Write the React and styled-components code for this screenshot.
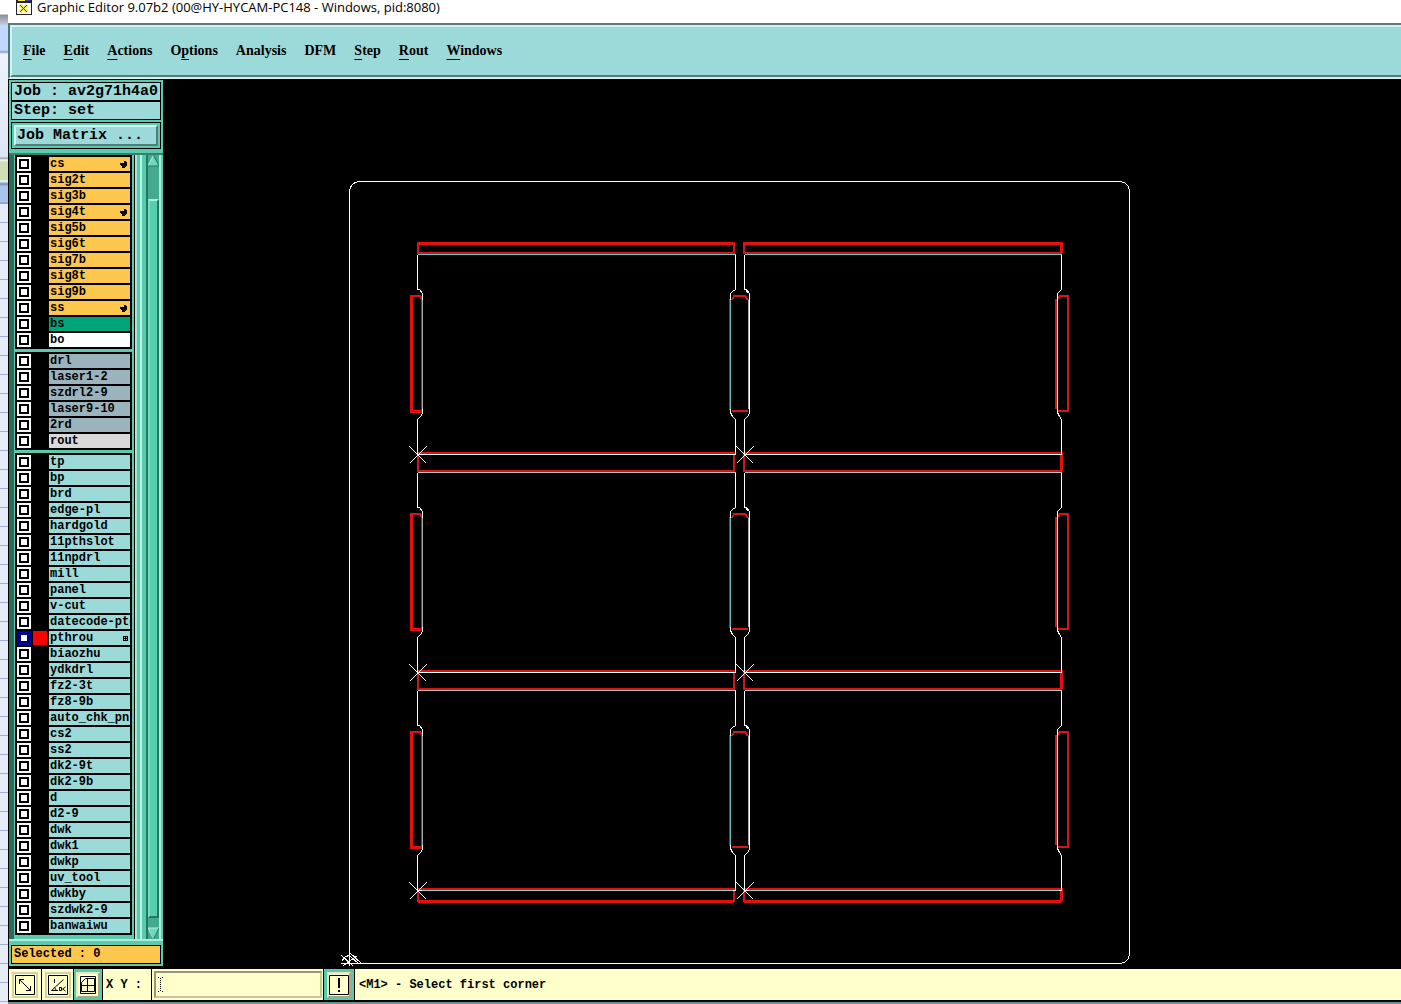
import React, { useState } from 'react';
import styled, { createGlobalStyle } from 'styled-components';

const GlobalStyle = createGlobalStyle`
  * {
    box-sizing: border-box;
  }

  body {
    margin: 0;
    background: #000;
    color: #000;
  }

  button,
  input {
    margin: 0;
    padding: 0;
    border-radius: 0;
    font: inherit;
    color: inherit;
  }
`;

const Screen = styled.div`
  display: flex;
  min-height: 100vh;
`;

const DesktopEdge = styled.div`
  flex: 0 0 8px;
  background:
    linear-gradient(
      #fff 0, #fff 14px, #8a8fa0 15px, #c9cede 25px, #c2d9ff 26px, #c2d9ff 50px,
      #8fa3c4 52px, #eef3fb 54px, #dce6f5 157px, #8e98a8 158px, #f6f8fb 160px,
      #cfe0b4 162px, #cfe0b4 180px, #fff 181px, #6f8fbe 184px, #a8c4ec 186px,
      #a8c4ec 202px, #7d97c2 203px, transparent 204px
    ),
    repeating-linear-gradient(#e6edf9 0, #e6edf9 13px, #9fb3d0 13px, #9fb3d0 14px, #e6edf9 14px, #e6edf9 19px);
`;

const EditorWindow = styled.div`
  display: flex;
  flex: 1;
  flex-direction: column;
  min-width: 0;
`;

const TitleBar = styled.header`
  display: flex;
  align-items: flex-start;
  gap: 5px;
  height: 23px;
  padding-left: 8px;
  background: #fff;
  overflow: hidden;

  svg {
    flex: none;
  }
`;

const Title = styled.h1`
  margin: 0;
  font: 400 13px/14px 'Open Sans', 'Noto Sans', sans-serif;
  white-space: nowrap;
`;

const MenuBar = styled.nav`
  border-top: 2px solid #5d7b7b;
  border-left: 2px solid #4a7676;
  border-bottom: 2px solid #d5f3f1;
`;

const MenuList = styled.div`
  display: flex;
  align-items: center;
  gap: 18px;
  height: 52px;
  padding: 0 11px;
  background: #9cdada;
  border-top: 2px solid #d0f4f4;
  border-left: 2px solid #d0f4f4;
  border-bottom: 2px solid #557c7b;
`;

const MenuButton = styled.button`
  border: 0;
  background: none;
  font: bold 14px/20px 'Liberation Serif', serif;

  u {
    text-underline-offset: 4px;
    text-decoration-thickness: 1px;
  }
`;

const Workspace = styled.div`
  display: flex;
  flex: 1;
`;

const Sidebar = styled.aside`
  display: flex;
  flex: 0 0 155px;
  flex-direction: column;
  min-width: 0;
  border-top: 1px solid #000;
  border-left: 1px solid #000;
  border-bottom: 2px solid #000;
  background: #5acbae;
  font: bold 12px/14px 'Liberation Mono', monospace;
`;

const JobPanel = styled.div`
  padding: 2px 2px 4px;
  font-size: 15px;
`;

const JobLine = styled.div`
  height: 19px;
  padding-left: 2px;
  border: 1px solid #000;
  background: #9cdada;
  line-height: 17px;
  white-space: pre;
`;

const MatrixFrame = styled.div`
  height: 27px;
  margin-top: 2px;
  padding: 2px;
  border: 1px solid #000;
`;

const MatrixButton = styled.button`
  display: block;
  width: 100%;
  height: 21px;
  padding-left: 1px;
  border: 2px solid;
  border-color: #d0f4f4 #557c7b #557c7b #d0f4f4;
  background: #9cdada;
  line-height: 17px;
  text-align: left;
`;

const ListArea = styled.div`
  display: flex;
  flex: 1;
  padding-right: 2px;
  border-top: 2px solid #35816b;
  border-bottom: 2px solid #a9efda;
`;

const LayerList = styled.div`
  display: flex;
  flex: 0 0 126px;
  flex-direction: column;
  gap: 3px;
  min-width: 0;
  padding: 0 2px 0 1px;
  border-left: 5px solid #2f6a59;
  border-right: 1px solid #000;
`;

const LayerGroup = styled.div`
  display: flex;
  flex-direction: column;
  gap: 2px;
  padding: 2px;
  background: #000;
`;

const LayerRow = styled.label`
  display: flex;
  gap: 2px;
  height: 14px;
`;

const LayerCheck = styled.input`
  appearance: none;
  flex: 0 0 14px;
  height: 14px;
  border: 2px solid #fff;
  background: #fff;
  box-shadow: inset 0 0 0 2px #000;

  &:checked {
    border-color: #0000a0;
    box-shadow: inset 0 0 0 2px #000078;
  }
`;

const Swatch = styled.span`
  flex: 0 0 14px;
  background: ${props => (props.$on ? '#f00' : '#000')};
`;

const fills = {
  signal: '#fdc74e',
  solder: '#00a47b',
  outline: '#fff',
  drill: '#9bb3bd',
  rout: '#d9d9d9',
  doc: '#9cdada',
};

const LayerName = styled.span`
  display: flex;
  flex: 1;
  align-items: center;
  min-width: 0;
  padding-left: 1px;
  background: ${props => fills[props.$kind]};
  overflow: hidden;
  white-space: nowrap;

  svg {
    flex: none;
    margin: 0 2px 0 auto;
  }
`;

const PaneEdge = styled.div`
  flex: 0 0 11px;
  background: linear-gradient(
    90deg,
    #a0ecd6 0 2px, #5acbae 2px 5px, #b4f5e3 5px 7px, #5acbae 7px
  );
`;

const ScrollBar = styled.div`
  display: flex;
  flex: 0 0 15px;
  flex-direction: column;
  border-left: 2px solid #277560;
  border-right: 2px solid #a9efda;
  background: #45a98f;
`;

const ScrollArrow = styled.button`
  height: 12px;
  border: 0;
  background: none;

  svg {
    display: block;
  }
`;

const Thumb = styled.div`
  flex: 1;
  margin: 32px 0 9px;
  border: 2px solid;
  border-color: #a9efda #277560 #277560 #70dcc0;
  background: #55cfb0;
`;

const Selected = styled.output`
  display: block;
  height: 19px;
  margin: 4px 2px 2px;
  padding-left: 2px;
  border: 1px solid #000;
  background: #fdc74e;
  line-height: 17px;
  white-space: pre;
`;

const Canvas = styled.main`
  flex: 1;
  min-width: 0;
  background: #000;
  overflow: hidden;

  svg {
    display: block;
  }
`;

const StatusBar = styled.footer`
  display: flex;
  gap: 1px;
  height: 36px;
  padding-left: 1px;
  border-top: 1px solid #000;
  border-bottom: 2px solid #6a9494;
  background: #000;
  font: bold 12px/16px 'Liberation Mono', monospace;
`;

const StatusCell = styled.div`
  display: flex;
  align-items: center;
  justify-content: center;
  flex: 0 0 ${props => props.$width}px;
  height: 31px;
  background: ${props => (props.$active ? '#55c9ac' : '#ffc')};
`;

const ToolButton = styled.button`
  display: flex;
  align-items: center;
  justify-content: center;
  width: ${props => (props.$active ? 24 : 26)}px;
  height: 26px;
  border: 2px solid;
  border-color: ${props => (props.$active ? '#e8e8bc #a8a583 #a8a583 #e8e8bc' : '#d3d3a5')};
  background: #ffc;

  svg {
    flex: none;
  }
`;

const CoordLabel = styled.label`
  flex: 0 0 48px;
  height: 31px;
  padding-left: 3px;
  background: #ffc;
  line-height: 32px;
  white-space: pre;
`;

const CoordInput = styled.input`
  width: 168px;
  height: 27px;
  padding-left: 4px;
  border: 2px solid;
  border-color: #97957a #c6c59d #c6c59d #97957a;
  background: #ffc;
`;

const CoordField = styled.div`
  display: grid;
  align-items: center;

  > * {
    grid-area: 1 / 1;
  }

  svg {
    margin-left: 4px;
    pointer-events: none;
  }
`;

const Message = styled.div`
  flex: 1;
  height: 31px;
  padding-left: 4px;
  background: #ffc;
  line-height: 32px;
  white-space: nowrap;
`;

const HandIcon = () => (
  <svg width="8" height="8" viewBox="0 0 8 8" shapeRendering="crispEdges" aria-hidden="true">
    <path d="M4 1h2v1h1v4H6v1H5v1H2V6H1V5H0V3h4z" />
  </svg>
);

const GridIcon = () => (
  <svg width="5" height="5" viewBox="0 0 5 5" shapeRendering="crispEdges" aria-hidden="true">
    <path d="M0 0h5v5H0zM1 1v1h1V1zM3 1v1h1V1zM1 3v1h1V3zM3 3v1h1V3z" fillRule="evenodd" />
  </svg>
);

const AppIcon = () => (
  <svg width="16" height="16" viewBox="0 0 16 16" aria-hidden="true">
    <path d="M0 0h16v15H0z" fill="#222" />
    <path d="M1 3h14v11H1z" fill="#fff" />
    <path d="M2 0h7v1H2z" fill="#ffe94a" />
    <path d="M10 0h4v1h-4z" fill="#3048c8" />
    <path d="M4 5l7 7M11 5l-7 7" stroke="#f0e640" strokeWidth="3" />
    <path d="M4 5l7 7M11 5l-7 7" stroke="#444" />
  </svg>
);

const ArrowIcon = ({ down }) => (
  <svg width="11" height="12" viewBox="0 0 11 12" aria-hidden="true">
    {down ? (
      <>
        <path d="M0 1h11L6 11z" fill="#6ed9be" />
        <path d="M0 1h11M0 1l5 10" stroke="#a9efda" fill="none" />
        <path d="M11 1L6 11" stroke="#277560" />
      </>
    ) : (
      <>
        <path d="M5 1l6 10H0z" fill="#6ed9be" />
        <path d="M5 1L0 11" stroke="#a9efda" />
        <path d="M6 1l5 10H0" stroke="#277560" fill="none" />
      </>
    )}
  </svg>
);

const toolPaths = {
  resize: 'M4.5 4.5l11 11M4.5 9V4.5H9M11 15.5h4.5V11',
  snap: 'M3.5 15.5L15.5 4.5M3.5 15.5H10M6.5 4v4M11.5 12.5v3h2v-3zM14.5 14l3 -2M14.5 14l3 2M6.5 12.5l2 3',
  grid: 'M7.5 3.5h9v13h-13v-9zM9.5 3.5v13M3.5 10.5h13',
};

const ToolIcon = ({ name }) => (
  <svg width="20" height="20" viewBox="0 0 20 20" fill="none" stroke="#000" aria-hidden="true">
    {name !== 'grid' && <path d="M0.5 0.5h19v19h-19z" />}
    {name === 'grid' && <path d="M2.5 1.5h15v17h-15z" />}
    {name === 'alert' ? (
      <path d="M10 3v10M10 15v2" strokeWidth="2" />
    ) : (
      <path d={toolPaths[name]} />
    )}
  </svg>
);

const CursorIcon = () => (
  <svg width="5" height="15" viewBox="0 0 5 15" fill="none" stroke="#000" aria-hidden="true">
    <path d="M0 0.5h1M4 0.5h1M2.5 1v13M0 14.5h1M4 14.5h1" strokeDasharray="1 1" />
  </svg>
);

const layerGroups = [
  [
    ['cs', 'signal', 'hand'],
    ['sig2t', 'signal'],
    ['sig3b', 'signal'],
    ['sig4t', 'signal', 'hand'],
    ['sig5b', 'signal'],
    ['sig6t', 'signal'],
    ['sig7b', 'signal'],
    ['sig8t', 'signal'],
    ['sig9b', 'signal'],
    ['ss', 'signal', 'hand'],
    ['bs', 'solder'],
    ['bo', 'outline'],
  ],
  [
    ['drl', 'drill'],
    ['laser1-2', 'drill'],
    ['szdrl2-9', 'drill'],
    ['laser9-10', 'drill'],
    ['2rd', 'drill'],
    ['rout', 'rout'],
  ],
  [
    'tp', 'bp', 'brd', 'edge-pl', 'hardgold', '11pthslot', '11npdrl', 'mill', 'panel', 'v-cut',
    'datecode-ptd', 'pthrou', 'biaozhu', 'ydkdrl', 'fz2-3t', 'fz8-9b', 'auto_chk_pnl', 'cs2',
    'ss2', 'dk2-9t', 'dk2-9b', 'd', 'd2-9', 'dwk', 'dwk1', 'dwkp', 'uv_tool', 'dwkby',
    'szdwk2-9', 'banwaiwu',
  ].map(name => [name, 'doc', name === 'pthrou' ? 'grid' : undefined]),
];

// label, index of the underlined letter
const menus = [
  ['File', 0],
  ['Edit', 0],
  ['Actions', 0],
  ['Options', 1],
  ['Analysis', -1],
  ['DFM', -1],
  ['Step', 0],
  ['Rout', 0],
  ['Windows', 0],
];

const rows = [0, 218, 436];

const Board = ({ left, right, inset, y }) => (
  <g fill="none" stroke="#fff">
    <path
      d={`M${left} ${y + 254}V${y + 289}h2l3 4V${y + 297}V${y + 412}l-1 3l-4 4V${y + 454}H${right}V${y + 419}
        l-${inset - 2} -3l-2 -4V${y + 293}l2 -2l${inset - 2} -2V${y + 254}`}
    />
    <path d={`M${left} ${y + 254}H${right}`} stroke={y === 0 ? '#6cc6c6' : '#bcbcbc'} />
    {y === 436 && <path d={`M${left + 4} ${y + 454}H${right - 3}`} stroke="#8ed0d0" />}
  </g>
);

const SideSlots = ({ y }) => (
  <g fill="none" stroke="#d01616" strokeWidth="2">
    <path d={`M411 ${y + 296}H420l2 3V${y + 411}`} />
    <path d={`M411 ${y + 295}V${y + 411}H422`} stroke="#e31010" strokeWidth="3" />
    <path d={`M732 ${y + 300}l2 -4H745l3 4`} />
    <path d={`M730 ${y + 299}V${y + 410}`} />
    <path d={`M732 ${y + 411}H748`} />
    <path d={`M1056 ${y + 299}V${y + 409}M1058 ${y + 299}l2 -3H1068V${y + 411}H1058`} />
  </g>
);

// one long edge is heavy, and the right-hand column closes with a heavy end too
const BarSlot = ({ left, right, top, bottom, heavy, bright }) => (
  <g fill="none" stroke="#d01616" strokeWidth="2">
    <path d={`M${left} ${top}V${bottom}H${right}V${top}z`} />
    <path d={`M${left} ${heavy}H${right}`} stroke="#e31010" strokeWidth="3" />
    <path d={`M${left} ${top}H${right}`} stroke="#e31010" />
    {bright && <path d={`M${right} ${top - 1}V${bottom}`} stroke="#e31010" strokeWidth="3" />}
  </g>
);

const PanelDrawing = () => (
  <svg
    width="1238"
    height="887"
    viewBox="163 79 1238 887"
    shapeRendering="crispEdges"
    role="img"
    aria-label="Panel layout"
  >
    <g>
      {rows.map(y => (
        <SideSlots key={y} y={y} />
      ))}
      {[[418, 734], [744, 1061]].map(([left, right]) => (
        <g key={left}>
          <BarSlot left={left} right={right} top={243} bottom={253} heavy={243} bright={left > 700} />
          <BarSlot left={left} right={right} top={453} bottom={471} heavy={453} bright={left > 700} />
          <BarSlot left={left} right={right} top={671} bottom={689} heavy={671} bright={left > 700} />
          <BarSlot left={left} right={right} top={889} bottom={901} heavy={901} bright={left > 700} />
        </g>
      ))}
    </g>
    <g transform="translate(0.5 0.5)">
      <path
        d="M349 963V193Q349 181 361 181H1118Q1129 181 1129 193V951Q1129 963 1118 963H340"
        fill="none"
        stroke="#fff"
      />
      {rows.map(y => (
        <g key={y}>
          <Board left={417} right={735} inset={5} y={y} />
          <path d={`M744 ${y + 289}h1l3 4`} fill="none" stroke="#fff" />
          <Board left={744} right={1061} inset={4} y={y} />
          <path d={`M422 ${y + 299}V${y + 408}M748 ${y + 299}V${y + 408}`} stroke="#a8a8a8" />
          <path d={`M730 ${y + 299}V${y + 408}`} stroke="#6cb8b8" />
          <path
            d={`M409 ${y + 446}l17 17M426 ${y + 446}l-17 17M736 ${y + 446}l17 17M753 ${y + 446}l-17 17`}
            stroke="#fff"
          />
        </g>
      ))}
      <path
        d="M341 955l12 11M357 955l-14 10M349 952v13M349 952l12 11M350 956l8 7M341 961l4 -5l4 -1"
        fill="none"
        stroke="#fff"
      />
    </g>
  </svg>
);

const MenuText = ({ label, hot }) =>
  hot < 0 ? (
    label
  ) : (
    <>
      {label.slice(0, hot)}
      <u>{label[hot]}</u>
      {label.slice(hot + 1)}
    </>
  );

const App = () => {
  const [active, setActive] = useState(['pthrou']);
  const [coords, setCoords] = useState('');

  const toggleLayer = name => {
    setActive(active.includes(name) ? active.filter(n => n !== name) : [...active, name]);
  };

  return (
    <Screen>
      <GlobalStyle />
      <DesktopEdge />
      <EditorWindow>
        <TitleBar>
          <AppIcon />
          <Title>Graphic Editor 9.07b2 (00@HY-HYCAM-PC148 - Windows, pid:8080)</Title>
        </TitleBar>

        <MenuBar>
          <MenuList>
            {menus.map(([label, hot]) => (
              <MenuButton key={label}>
                <MenuText label={label} hot={hot} />
              </MenuButton>
            ))}
          </MenuList>
        </MenuBar>

        <Workspace>
          <Sidebar>
            <JobPanel>
              <JobLine>Job : av2g71h4a0</JobLine>
              <JobLine>Step: set</JobLine>
              <MatrixFrame>
                <MatrixButton>Job Matrix ...</MatrixButton>
              </MatrixFrame>
            </JobPanel>

            <ListArea>
              <LayerList>
                {layerGroups.map((group, i) => (
                  <LayerGroup key={i}>
                    {group.map(([name, kind, mark]) => (
                      <LayerRow key={name}>
                        <LayerCheck
                          type="checkbox"
                          checked={active.includes(name)}
                          onChange={() => toggleLayer(name)}
                        />
                        <Swatch $on={active.includes(name)} />
                        <LayerName $kind={kind}>
                          {name}
                          {mark === 'hand' && <HandIcon />}
                          {mark === 'grid' && <GridIcon />}
                        </LayerName>
                      </LayerRow>
                    ))}
                  </LayerGroup>
                ))}
              </LayerList>
              <PaneEdge />
              <ScrollBar>
                <ScrollArrow aria-label="Scroll up">
                  <ArrowIcon />
                </ScrollArrow>
                <Thumb />
                <ScrollArrow aria-label="Scroll down">
                  <ArrowIcon down />
                </ScrollArrow>
              </ScrollBar>
            </ListArea>

            <Selected>Selected : 0</Selected>
          </Sidebar>

          <Canvas>
            <PanelDrawing />
          </Canvas>
        </Workspace>

        <StatusBar>
          <StatusCell $width={32}>
            <ToolButton aria-label="Resize">
              <ToolIcon name="resize" />
            </ToolButton>
          </StatusCell>
          <StatusCell $width={31}>
            <ToolButton aria-label="Snap angle">
              <ToolIcon name="snap" />
            </ToolButton>
          </StatusCell>
          <StatusCell $width={28} $active>
            <ToolButton $active aria-label="Grid">
              <ToolIcon name="grid" />
            </ToolButton>
          </StatusCell>
          <CoordLabel htmlFor="coords">X Y :</CoordLabel>
          <StatusCell $width={171}>
            <CoordField>
              <CoordInput id="coords" value={coords} onChange={e => setCoords(e.target.value)} />
              <CursorIcon />
            </CoordField>
          </StatusCell>
          <StatusCell $width={30} $active>
            <ToolButton $active aria-label="Alert">
              <ToolIcon name="alert" />
            </ToolButton>
          </StatusCell>
          <Message>&lt;M1&gt; - Select first corner</Message>
        </StatusBar>
      </EditorWindow>
    </Screen>
  );
};

export default App;
